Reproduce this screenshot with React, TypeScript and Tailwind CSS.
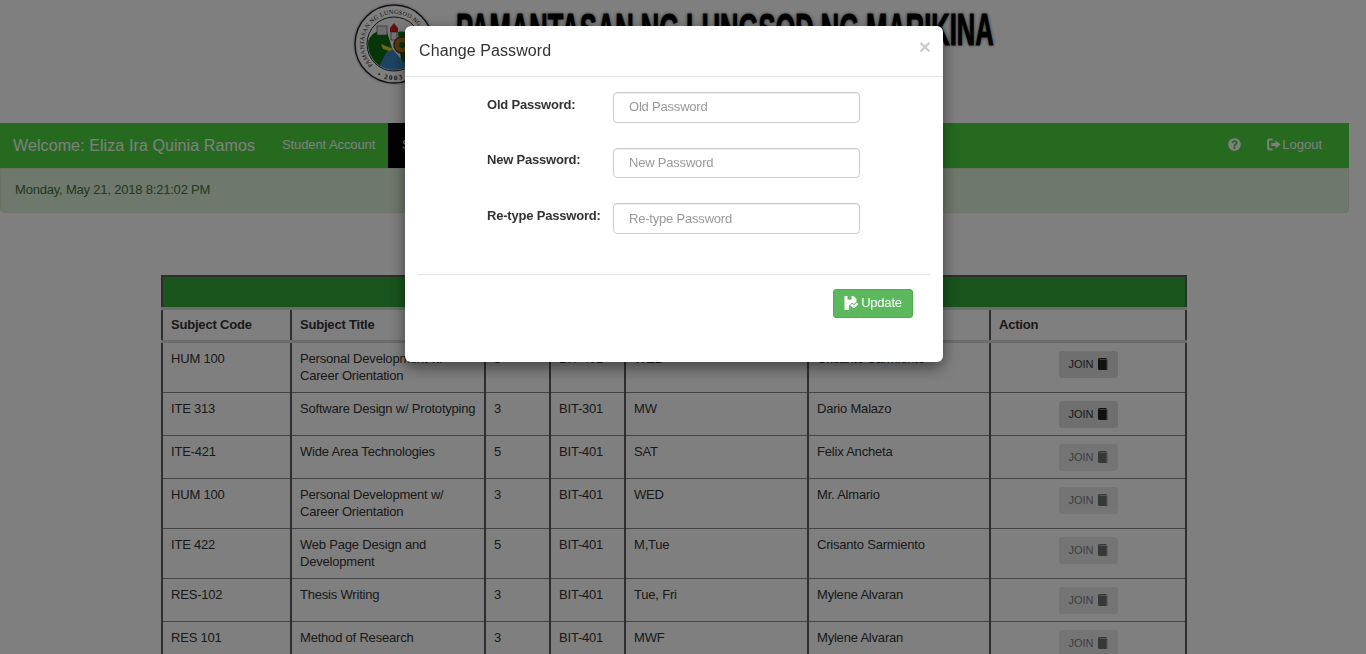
import React from "react";
import { FaQuestionCircle } from "react-icons/fa";

const F = "[font-family:'Liberation_Sans',Arial,sans-serif]";

function Seal() {
  return (
    <svg width="84" height="84" viewBox="0 0 84 84" className="shrink-0">
      <defs>
        <path id="sealTop" d="M 20.8 63.2 A 30 30 0 1 1 63.2 63.2" fill="none" />
        <path id="sealBot" d="M 21 71.3 A 36 36 0 0 0 63 71.3" fill="none" />
        <clipPath id="inner"><circle cx="42" cy="42" r="26" /></clipPath>
      </defs>
      <circle cx="42" cy="42" r="41.5" fill="#e8e8e8" />
      <circle cx="42" cy="42" r="39" fill="#fff" stroke="#222" strokeWidth="1.5" />
      <circle cx="42" cy="42" r="27" fill="#fff" stroke="#222" strokeWidth="1" />
      <text fontSize="6.2" fontFamily="'Liberation Serif',serif" fill="#222" letterSpacing="0.2">
        <textPath href="#sealTop">PAMANTASAN NG LUNGSOD NG MARIKINA</textPath>
      </text>
      <text fontSize="7" fontFamily="'Liberation Serif',serif" fill="#222" letterSpacing="1.6" fontWeight="700" textAnchor="middle">
        <textPath href="#sealBot" startOffset="50%">• 2003 •</textPath>
      </text>
      <g clipPath="url(#inner)">
        <rect x="14" y="14" width="56" height="56" fill="#f4f4f4" />
        <path d="M14 42 C20 30 28 26 35 30 L40 46 L26 68 L14 68 Z" fill="#0d6a12" />
        <path d="M46 30 C54 28 62 32 70 42 L70 68 L50 68 Z" fill="#0d6a12" />
        <path d="M38 44 L24 70 L60 70 Z" fill="#3c86c4" />
        <rect x="25" y="24" width="10" height="9" fill="#ddd" stroke="#555" strokeWidth="0.7" />
        <path d="M38 26 L42 21 L46 26 L46 30 L38 30 Z" fill="#cc1f1f" />
        <rect x="39" y="30" width="6" height="8" fill="#e8e8e8" stroke="#333" strokeWidth="0.6" />
        <circle cx="50" cy="43" r="8" fill="#b5791f" stroke="#5b3c0c" strokeWidth="1.5" />
        <circle cx="50" cy="43" r="3" fill="#0d6a12" />
        <path d="M29 42 L41 47 L38 49 L31 47 Z" fill="#e6d21e" />
      </g>
    </svg>
  );
}

function BookIcon() {
  return (
    <svg width="11" height="12" viewBox="0 0 11 12" className="inline-block">
      <path d="M1 1.6 Q1 0 2.6 0 H9.4 V1 H3 Q2.2 1 2.2 1.6 H10.2 V12 H2.6 Q1 12 1 10.4 Z" fill="#222" />
      <path d="M9 2.4 H10.2 V12 H9 Z" fill="#555" />
    </svg>
  );
}

function LogoutIcon() {
  return (
    <svg width="14" height="13" viewBox="0 0 15 13" fill="none">
      <path d="M6 1.2 H2.8 Q1.2 1.2 1.2 2.8 V10.2 Q1.2 11.8 2.8 11.8 H6" stroke="#fff" strokeWidth="2.2" />
      <path d="M4.5 5 H9 V2 L14.5 6.5 L9 11 V8 H4.5 Z" fill="#fff" />
    </svg>
  );
}

function SavedIcon() {
  return (
    <svg width="15" height="14" viewBox="0 0 14 14">
      <path d="M0 0 H9 L12 3 V5.5 L9.5 8 L7.8 6.4 L4.5 9.6 L4.5 14 H0 Z" fill="#fff" />
      <rect x="3" y="0" width="4" height="3.6" fill="#5cb85c" />
      <path d="M5.6 9.4 L7.8 7.6 L9.5 9.3 L12.4 6.4 L14 8 L9.5 12.6 Z" fill="#fff" />
    </svg>
  );
}

type Row = { code: string; title: React.ReactNode; u: string; sec: string; day: string; ins: string; on?: boolean };

const rows: Row[] = [
  { code: "HUM 100", title: "Personal Development w/ Career Orientation", u: "3", sec: "BIT-401", day: "WED", ins: "Crisanto Sarmiento", on: true },
  { code: "ITE 313", title: "Software Design w/ Prototyping", u: "3", sec: "BIT-301", day: "MW", ins: "Dario Malazo", on: true },
  { code: "ITE-421", title: "Wide Area Technologies", u: "5", sec: "BIT-401", day: "SAT", ins: "Felix Ancheta" },
  { code: "HUM 100", title: "Personal Development w/ Career Orientation", u: "3", sec: "BIT-401", day: "WED", ins: "Mr. Almario" },
  { code: "ITE 422", title: "Web Page Design and Development", u: "5", sec: "BIT-401", day: "M,Tue", ins: "Crisanto Sarmiento" },
  { code: "RES-102", title: "Thesis Writing", u: "3", sec: "BIT-401", day: "Tue, Fri", ins: "Mylene Alvaran" },
  { code: "RES 101", title: "Method of Research", u: "3", sec: "BIT-401", day: "MWF", ins: "Mylene Alvaran" },
];

const th = "border-x-2 border-x-[#5c5c5c] border-t-[3px] border-t-[#d8d8d8] border-b-[3px] border-b-[#d8d8d8] px-2 py-0 h-[33px] text-left font-bold text-[13px] tracking-[-0.2px] text-[#333]";
const td = "border-x-2 border-x-[#5c5c5c] border-y border-y-[#888] pl-2 pr-2 pt-[7px] pb-[7px] align-top text-[13px] tracking-[-0.2px] leading-[17px] text-[#333]";

function Field({ label, ph, h, pt, pb }: { label: string; ph: string; h: string; pt: string; pb: string }) {
  return (
    <div className="flex items-start pl-[82px]">
      <label className={`w-[126px] shrink-0 font-bold text-[13px] tracking-[-0.2px] leading-5 text-[#333] ${pt}`}>{label}</label>
      <input
        readOnly
        placeholder={ph}
        className={`w-[247px] ${h} ${pb} rounded border border-[#ccc] bg-white pl-[15px] pr-[15px] text-[13px] tracking-[-0.2px] text-[#333] placeholder:text-[#999] shadow-[inset_0_1px_1px_rgba(0,0,0,0.075)] outline-none`}
      />
    </div>
  );
}

export default function App() {
  return (
    <div className={`h-screen overflow-hidden bg-white ${F}`}>
      <div className="w-[1349px]">
        <header className="h-[123px] flex items-start pl-[352px] pt-[2px] gap-[20px]">
          <Seal />
          <div className="w-[537px] h-[60px] pt-[5px] whitespace-nowrap">
            <div className="origin-top-left scale-x-[0.567] text-[45px] leading-[45px] font-bold text-black [-webkit-text-stroke:1px_#000] [text-shadow:0_0_5px_#999,0_0_5px_#999]">
              PAMANTASAN NG LUNGSOD NG MARIKINA
            </div>
          </div>
        </header>

        <nav className="h-[45px] bg-[#4ad43f] flex items-stretch text-white">
          <div className="pl-[13px] w-[267px] flex items-center text-[16px] tracking-[0.1px]">Welcome: Eliza Ira Quinia Ramos</div>
          <div className="w-[121px] pl-[15px] flex items-center text-[13px] tracking-[-0.1px] pb-[2px]">Student Account</div>
          <div className="w-[120px] pl-[14px] flex items-center text-[13px] pb-[2px] bg-black">Subjects</div>
          <div className="ml-auto flex items-center pb-[2px] pr-[27px] text-[13px]">
            <FaQuestionCircle className="text-[13px] mr-[26px]" />
            <span className="flex items-center gap-px"><LogoutIcon />Logout</span>
          </div>
        </nav>

        <div className="h-[45px] bg-[#dff0d8] border border-[#d6e9c6] rounded-b pl-[14px] pt-[12px] text-[13px] tracking-[-0.2px] leading-[17px] text-[#3c763d]">
          Monday, May 21, 2018 8:21:02 PM
        </div>

        <div className="ml-[161px] mt-[62px]">
          <table className="w-[1024px] table-fixed border-collapse">
            <colgroup>
              <col className="w-[129px]" />
              <col className="w-[194px]" />
              <col className="w-[65px]" />
              <col className="w-[75px]" />
              <col className="w-[183px]" />
              <col className="w-[182px]" />
              <col className="w-[196px]" />
            </colgroup>
            <thead>
              <tr>
                <th colSpan={7} className="h-[32px] bg-[#30a837] border-x-2 border-t-2 border-x-[#5c5c5c] border-t-[#5c5c5c]" />
              </tr>
              <tr>
                <th className={th}>Subject Code</th>
                <th className={th}>Subject Title</th>
                <th className={th}>Units</th>
                <th className={th}>Section</th>
                <th className={th}>Schedule</th>
                <th className={th}>Instructor</th>
                <th className={th}>Action</th>
              </tr>
            </thead>
            <tbody>
              {rows.map((r, i) => (
                <tr key={i}>
                  <td className={td}>{r.code}</td>
                  <td className={`${td} !pr-0 !pb-2`}>{r.title}</td>
                  <td className={td}>{r.u}</td>
                  <td className={td}>{r.sec}</td>
                  <td className={td}>{r.day}</td>
                  <td className={td}>{r.ins}</td>
                  <td className={`${td} text-center !pt-2`}>
                    <span className={`flex mx-auto h-[27px] w-[59px] items-center justify-center gap-[3px] rounded-[3px] bg-[#dedede] text-[11px] tracking-normal text-[#333] ${r.on ? "" : "opacity-65"}`}>
                      JOIN <BookIcon />
                    </span>
                  </td>
                </tr>
              ))}
            </tbody>
          </table>
        </div>
      </div>

      <div className="fixed inset-0 bg-black/50">
        <div className="pl-[405px] pt-[26px]">
          <div className="w-[538px] h-[336px] bg-white rounded-md shadow-[0_5px_15px_rgba(0,0,0,0.5)]">
            <div className="h-[51px] border-b border-[#e5e5e5] pl-[14px] pr-[14px] flex items-start justify-between">
              <h4 className="text-[16px] leading-[20px] pt-[15px] text-[#333] tracking-[0.1px]">Change Password</h4>
              <span className="text-[21px] leading-[21px] pt-[10px] font-bold text-[#ccc] mr-[-2px]">×</span>
            </div>
            <div className="pt-[15px] flex flex-col gap-[25px]">
              <Field label="Old Password:" ph="Old Password" h="h-[31px]" pt="pt-[3px]" pb="pb-[2px]" />
              <Field label="New Password:" ph="New Password" h="h-[30px]" pt="pt-[2px]" pb="pb-[2px]" />
              <Field label="Re-type Password:" ph="Re-type Password" h="h-[31px]" pt="pt-[3px]" pb="pb-px" />
            </div>
            <div className="mx-[13px] mt-[40px] border-t border-[#e5e5e5] pt-[14px] flex justify-end pr-[17px]">
              <span className="inline-flex h-[29px] w-[80px] pb-[2px] items-center justify-center gap-[2px] rounded-[3px] bg-[#5cb85c] border border-[#4cae4c] text-white text-[13px] tracking-[-0.2px]">
                <SavedIcon />Update
              </span>
            </div>
          </div>
        </div>
      </div>
    </div>
  );
}
